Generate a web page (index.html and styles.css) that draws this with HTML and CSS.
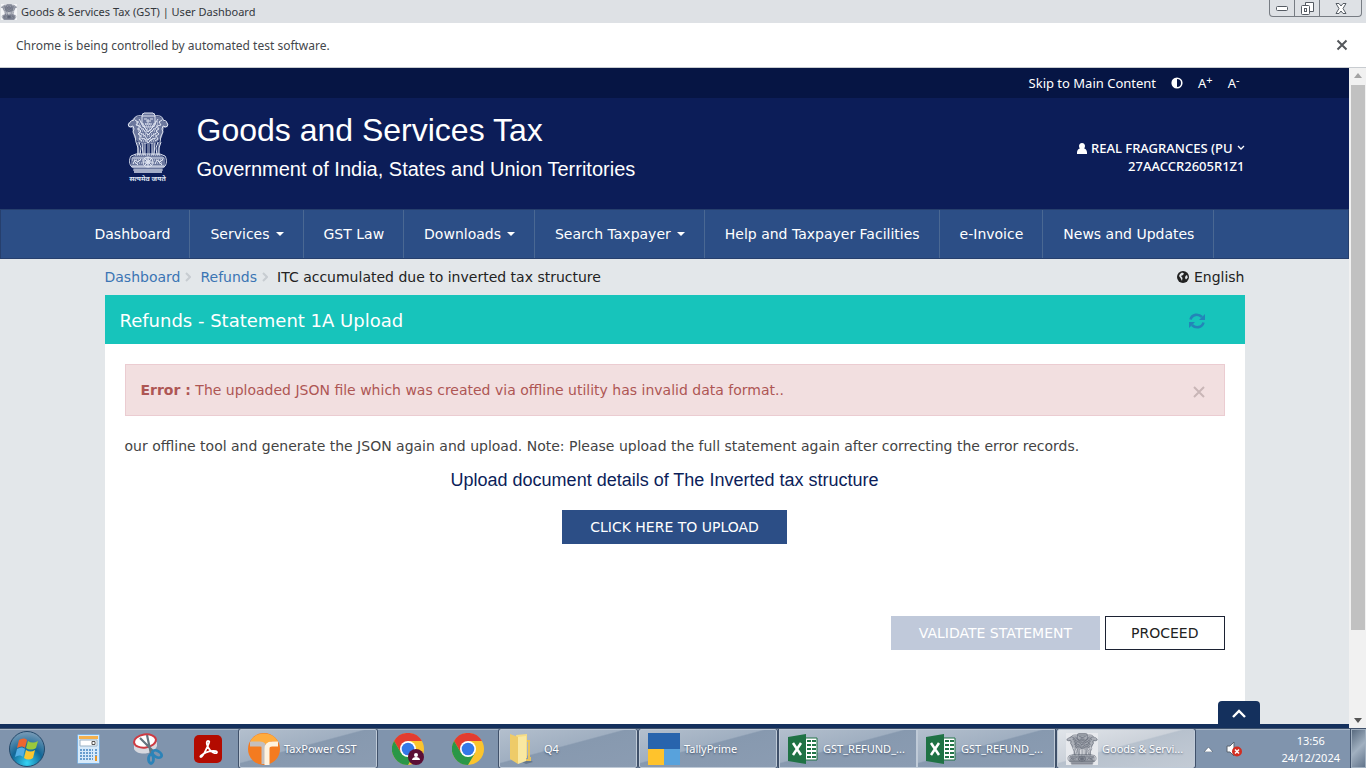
FILE: index.html
```html
<!DOCTYPE html>
<html lang="en">
<head>
<meta charset="utf-8">
<title>Goods &amp; Services Tax (GST) | User Dashboard</title>
<link rel="stylesheet" href="styles.css">
</head>
<body>
<svg class="defs" aria-hidden="true">
  <defs>
    <symbol id="emblem" viewBox="0 0 42 62" preserveAspectRatio="none">
      <g fill="currentColor" opacity=".45">
        <path d="M15 1h13v4c6-1 9 2 9 4l4 2v4l-4 1-2 9-5 5-3 2H15l-4-2-4-5-2-9-4-1v-4l4-2c0-3 4-5 10-4z"/>
        <path d="M10 30h2l1 13h-3zM15 31h2l1 13h-2zM20 32h3v12h-3zM26 31h2l-1 12h-2zM31 30h2l-1 13h-2z"/>
        <path d="M8 43h26l4 3v9l-3 2v4H7v-4l-3-2v-9z"/>
      </g>
      <g fill="none" stroke="currentColor" stroke-width="1">
        <path d="M15 3l2-2h9l2 2v8l-3 4h-7l-3-4zM15 4h13M17 7h3M23 7h3M21 7v4M18 12h6M19 9h5"/>
        <path d="M15 4c-5-1-8 1-8 4l-3 1-3 4 2 2 3-1 1 3-1 3 2 4 1 6M28 4c5-1 8 1 8 4l3 1 2 4-2 2-3-1-1 3 1 3-2 4-1 6"/>
        <path d="M8 8l3 2-2 3 4 1-2 3 3 2-3 3 3 2-2 3 3 2M35 8l-3 2 2 3-4 1 2 3-3 2 3 3-3 2 2 3-3 2"/>
        <path d="M12 7l2 3 2 4 3 3 2 3 3-3 3-3 2-4 2-3M13 15l4 3 4 5 5-5 4-3M12 20l5 3 4 5 5-5 5-3M14 26l4 1 3 4 4-4 4-1"/>
        <path d="M9 30l2 6v7M12 30l2 6-1 7M15 31l1 12M18 31v12M25 31v12M28 31l-1 12M31 30l-2 6 1 7M34 30l-2 6v7"/>
        <path d="M4 44c-2 3-2 9 1 11h32c3-2 3-8 1-11l-5-2H9zM5 46h32M5 54h32M6 58h30M7 60h28"/>
        <circle cx="21" cy="50" r="5"/><circle cx="21" cy="50" r="2"/>
        <path d="M16 50h10M21 45v10M17 46l8 8M25 46l-8 8M6 52l2-4 3 2 3-3M28 52l2-4 3 2 3-3M7 49l4 4M31 49l4 4"/>
      </g>
      <g fill="none" stroke="currentColor" stroke-width="1" stroke-dasharray="1 1">
        <path d="M10 12h22M11 14h20M10 17h22M11 19h20M12 22h18M12 24h18M13 27h16M14 29h14M5 48h32M6 51h30M9 10h6M28 10h6M8 43h26"/>
      </g>
    </symbol>
    <symbol id="chrome" viewBox="0 0 32 32">
      <circle cx="16" cy="16" r="16" fill="#fbc42d"/>
      <path d="M16 16L9.100 20 2.100 8A16 16 0 0 1 29.900 8H16z" fill="#e33d30"/>
      <path d="M2.100 8A16 16 0 0 0 16 32l7-12-7-4-6.900 4z" fill="#2a9748"/>
      <circle cx="16" cy="16" r="8" fill="#fff"/><circle cx="16" cy="16" r="6.300" fill="#3478e8"/>
    </symbol>
    <symbol id="excel" viewBox="0 0 30 30">
      <path d="M17 4h12v22H17z" fill="#fff" stroke="#217346"/>
      <path d="M19 7h4M24 7h4M19 11h4M24 11h4M19 15h4M24 15h4M19 19h4M24 19h4M19 23h4M24 23h4" stroke="#217346" stroke-width="2"/>
      <path d="M0 3l18-3v30L0 27z" fill="#1f7244"/>
      <path d="M5 9l8 12M13 9L5 21" stroke="#fff" stroke-width="2.500"/>
    </symbol>
  </defs>
</svg>

<header class="titlebar">
  <svg class="favicon"><use href="#emblem"/></svg>
  <span>Goods &amp; Services Tax (GST) | User Dashboard</span>
  <div class="window-controls">
    <button aria-label="Minimize"><svg width="12" height="5" fill="#fff" stroke="#555b63"><rect x=".5" y=".5" width="11" height="4" rx="1"/></svg></button>
    <button aria-label="Restore"><svg width="13" height="13" fill="#fff" stroke="#555b63"><path d="M4.500 3V.5h8v9H9"/><rect x=".5" y="3.500" width="8" height="9" rx="1"/><rect x="3.500" y="6.500" width="2" height="3"/></svg></button>
    <button class="wide" aria-label="Close window"><svg width="12" height="11" fill="#fff" stroke="#555b63"><path d="M1 .5h3l2 2.500 2-2.500h3L8 5.500l3 5H8L6 8l-2 2.500H1l3-5z"/></svg></button>
  </div>
</header>
<div class="infobar">
  <span>Chrome is being controlled by automated test software.</span>
  <button aria-label="Close message"><svg width="12" height="12" stroke="#54575b" stroke-width="2"><path d="M1.500 1.500l9 9M10.500 1.500l-9 9"/></svg></button>
</div>

<div class="viewport">
  <main class="page">
    <div class="topbar">
      <div class="container topbar-row">
        <a href="#main">Skip to Main Content</a>
        <button aria-label="Contrast"><svg width="12" height="12"><circle cx="6" cy="6" r="4.800" fill="none" stroke="#fff" stroke-width="1.600"/><path d="M6 1a5 5 0 0 0 0 10z" fill="#fff"/></svg></button>
        <button>A<sup>+</sup></button>
        <button>A<sup>-</sup></button>
      </div>
    </div>
    <div class="masthead">
      <div class="container masthead-row">
        <div class="logo">
          <svg><use href="#emblem"/></svg>
          <span lang="hi">सत्यमेव जयते</span>
        </div>
        <div class="brand">
          <h1>Goods and Services Tax</h1>
          <p>Government of India, States and Union Territories</p>
        </div>
        <div class="account">
          <a href="#account"><svg width="10" height="11" fill="#fff"><path d="M5 0c2 0 3 1.500 3 3 0 1-.3 1.800-.8 2.400C9 6 10 7.500 10 9.500V11H0V9.500C0 7.500 1 6 2.800 5.400 2.300 4.800 2 4 2 3c0-1.500 1-3 3-3z"/></svg>REAL FRAGRANCES (PU<svg width="8" height="6" fill="none" stroke="#fff" stroke-width="1.300"><path d="M1 1l3 3 3-3"/></svg></a>
          <span>27AACCR2605R1Z1</span>
        </div>
      </div>
    </div>
    <nav class="mainnav">
      <ul class="container">
        <li><a href="#dashboard">Dashboard</a></li>
        <li><a href="#services">Services <i class="caret"></i></a></li>
        <li><a href="#law">GST Law</a></li>
        <li><a href="#downloads">Downloads <i class="caret"></i></a></li>
        <li><a href="#search">Search Taxpayer <i class="caret"></i></a></li>
        <li><a href="#help">Help and Taxpayer Facilities</a></li>
        <li><a href="#einvoice">e-Invoice</a></li>
        <li><a href="#news">News and Updates</a></li>
      </ul>
    </nav>
    <div class="body" id="main">
      <div class="container crumbs">
        <a href="#dashboard">Dashboard</a><svg class="sep"><path d="M1 1l4 4-4 4"/></svg>
        <a href="#refunds">Refunds</a><svg class="sep"><path d="M1 1l4 4-4 4"/></svg>
        <span>ITC accumulated due to inverted tax structure</span>
        <button class="language"><svg width="12" height="12"><circle cx="6" cy="6" r="6" fill="#222"/><path d="M3 3l2-1.500 2 1-1 1.500-2 1 1.500 2L5 10 3.500 7 2 5zM8.500 5l1.500-1 .8 2.500L9 8.500l-1-1.500z" fill="#e3e7ea"/></svg> English</button>
      </div>
      <section class="container card">
        <div class="card-head">
          <h2>Refunds - Statement 1A Upload</h2>
          <button aria-label="Refresh"><svg width="16" height="16" viewBox="0 0 16 16"><g fill="none" stroke="#2385b8" stroke-width="2.600"><path d="M1.500 6.500C3 1 9.500.5 13 4M14.500 9.500C13 15 6.500 15.500 3 12"/></g><path d="M16 1v6h-6zM0 15V9h6z" fill="#2385b8"/></svg></button>
        </div>
        <div class="card-body">
          <div class="alert" role="alert">
            <p><strong>Error :</strong> The uploaded JSON file which was created via offline utility has invalid data format..</p>
            <button aria-label="Dismiss"><svg width="12" height="12" stroke="#c9b6b7" stroke-width="2"><path d="M1 1l10 10M11 1L1 11"/></svg></button>
          </div>
          <p class="ticker">our offline tool and generate the JSON again and upload. Note: Please upload the full statement again after correcting the error records.</p>
          <h3>Upload document details of The Inverted tax structure</h3>
          <button class="btn primary">CLICK HERE TO UPLOAD</button>
          <div class="actions">
            <button class="btn primary" disabled>VALIDATE STATEMENT</button>
            <button class="btn outline">PROCEED</button>
          </div>
        </div>
      </section>
    </div>
    <div class="footer-edge">
      <div class="container"><button class="to-top" aria-label="Back to top"><svg width="14" height="9" fill="none" stroke="#fff" stroke-width="2.400"><path d="M1 8l6-6 6 6"/></svg></button></div>
    </div>
  </main>
  <div class="scrollbar">
    <i class="up"></i><div class="thumb"></div><i class="down"></i>
  </div>
</div>

<footer class="taskbar">
  <button class="launch" aria-label="Start"><svg width="38" height="38" viewBox="0 0 38 38">
    <defs><radialGradient id="orb" cx=".5" cy=".9" r=".9"><stop offset="0" stop-color="#34d3f4"/><stop offset=".5" stop-color="#126797"/><stop offset="1" stop-color="#7d9db8"/></radialGradient></defs>
    <circle cx="19" cy="19" r="17.500" fill="url(#orb)" stroke="#24496b"/>
    <path d="M11 10c3-2 6-2 8 0l-2 8c-2-2-5-2-8 0z" fill="#ed6530"/><path d="M20 11c3 2 6 2 10 0l-2 7c-3 2-7 2-10 0z" fill="#9ac83c"/>
    <path d="M9 19c3-2 6-2 8 0l-2 8c-2-2-5-2-8 0z" fill="#53aee4"/><path d="M18 20c3 2 6 2 9 0l-2 8c-3 2-6 2-9 0z" fill="#fbc62f"/></svg></button>
  <button class="launch" aria-label="Calculator"><svg width="23" height="30"><rect x=".5" y=".5" width="22" height="29" rx="1" fill="#d7eafa" stroke="#79aede"/><path d="M2 2h19v3H2z" fill="#f4b14d"/><path d="M3 6h17v6H3z" fill="#fff" stroke="#9ab2c5"/><path d="M15 7.500h3v3h-3z" fill="none" stroke="#555"/><path d="M3 16h13M3 19h13M3 22h13M3 25h13" stroke="#679dce" stroke-width="2" stroke-dasharray="2 1"/><path d="M19 15v7" stroke="#679dce" stroke-width="2" stroke-dasharray="2 1"/><path d="M18 22h2v5h-2z" fill="#e99624"/></svg></button>
  <button class="launch" aria-label="Snipping Tool"><svg width="30" height="32"><path d="M1 9v7c3 7 20 6 23-3V9z" fill="#d6d8df"/><ellipse cx="12" cy="8" rx="11" ry="6.500" transform="rotate(-8 12 8)" fill="#fff" stroke="#ce3a42" stroke-width="2"/><path d="M7 5l14 14M14 2l4 19" stroke="#66747f" stroke-width="2.200"/><g fill="none" stroke="#2c83b8" stroke-width="2.800"><ellipse cx="24" cy="21" rx="5" ry="3" transform="rotate(30 24 21)"/><ellipse cx="18" cy="26" rx="2.500" ry="4.500"/></g></svg></button>
  <button class="launch" aria-label="Acrobat"><svg width="28" height="28"><rect width="28" height="28" rx="5" fill="#b30b00"/><path d="M14 6c-2.500 0-1 5.500 2 9s7 4 7 2.200-7-1.700-11 .3-7 4.500-5 4.500 4.500-6 6.500-10.500S16 6 14 6z" fill="none" stroke="#fff" stroke-width="1.800"/></svg></button>
  <button class="task"><svg width="32" height="32"><circle cx="16" cy="16" r="16" fill="#f47b20"/><path d="M3 7C9-2 25-2 30 9l-7-1-2 3H3z" fill="#ffac3e"/><path d="M2 11h10c3 0 4 1 4 4v16" fill="none" stroke="#c4bfbd" stroke-width="5"/><path d="M19 32V16c0-4 2-5 5-5h6" fill="none" stroke="#fff3df" stroke-width="5"/></svg><span>TaxPower GST</span></button>
  <button class="launch" aria-label="Chrome profile"><svg width="32" height="32"><use href="#chrome"/><circle cx="24" cy="24" r="8" fill="#5b0f35"/><circle cx="24" cy="22" r="2" fill="#fff"/><path d="M20 27c0-4 8-4 8 0z" fill="#fff"/></svg></button>
  <button class="launch" aria-label="Chrome"><svg width="32" height="32"><use href="#chrome"/></svg></button>
  <button class="task"><svg width="32" height="32"><path d="M14 29l8-2 3 2-7 2z" fill="#66788b"/><path d="M8 2l11-1v24l-8 4z" fill="#f5dc85"/><path d="M2 1l8 3v27l-8-5z" fill="#eecb68"/><path d="M10 4l8-1v25l-8 3z" fill="#f9e8a1"/><path d="M19 8h2v19h-3M22 24v4" fill="none" stroke="#e9c35d" stroke-width="2"/></svg><span>Q4</span></button>
  <button class="task"><svg width="32" height="32"><path d="M0 0h32v16H0z" fill="#2864ad"/><path d="M0 16h16v16H0z" fill="#ffc32c"/><path d="M16 16h16v16H16z" fill="#58a2dc"/></svg><span>TallyPrime</span></button>
  <div class="task-group">
    <button class="task"><svg width="30" height="30"><use href="#excel"/></svg><span>GST_REFUND_...</span></button>
    <button class="task"><svg width="30" height="30"><use href="#excel"/></svg><span>GST_REFUND_...</span></button>
  </div>
  <button class="task active"><svg class="emblem-tile" width="32" height="32"><use href="#emblem"/></svg><span>Goods &amp; Servi...</span></button>
  <div class="tray">
    <svg width="9" height="6"><path d="M0 6l4.500-5L9 6z" fill="#fff" stroke="#46576a" stroke-width=".6"/></svg>
    <svg width="17" height="16"><path d="M1 5h3l4-4v14l-4-4H1z" fill="#fff" stroke="#58636e"/><circle cx="11" cy="10.500" r="5" fill="#d22d20"/><path d="M9 8.500l4 4M13 8.500l-4 4" stroke="#fff" stroke-width="1.500"/></svg>
  </div>
  <div class="clock"><time>13:56</time><time>24/12/2024</time></div>
  <button class="show-desktop" aria-label="Show desktop"></button>
</footer>
</body>
</html>
```
FILE: styles.css
```css
* { box-sizing: border-box; }
body { margin: 0; min-height: 100vh; display: flex; flex-direction: column; font-family: "DejaVu Sans", Verdana, sans-serif; font-size: 14px; color: #222; background: #e3e7ea; }
h1, h2, h3, p, ul { margin: 0; padding: 0; font-weight: 400; }
button { font: inherit; color: inherit; background: none; border: 0; padding: 0; }
a { color: inherit; text-decoration: none; }
svg { flex: none; }
.defs { position: absolute; width: 0; height: 0; }

.titlebar { display: flex; height: 23px; padding: 0 4px 0 1px; align-items: center; background: #dee1e5; font: 11px "Noto Sans", sans-serif; color: #33373c; gap: 4px; }
.favicon { width: 16px; height: 16px; color: #4d5468; background: #f4f5f8; }
.window-controls { display: flex; align-self: flex-start; height: 17px; margin-left: auto; border: 1px solid #777c83; border-top: 0; border-radius: 0 0 4px 4px; }
.window-controls button { width: 25px; display: flex; justify-content: center; align-items: center; border-right: 1px solid #777c83; }
.window-controls button.wide { width: 41px; border: 0; }
.infobar { display: flex; height: 45px; padding: 0 18px 0 16px; align-items: center; justify-content: space-between; background: #fff; border-bottom: 1px solid #c8ccd0; font: 12px "Noto Sans", sans-serif; color: #44474b; }
.infobar button { display: flex; }

.viewport { flex: 1; display: flex; }
.page { flex: 1; min-width: 0; display: flex; flex-direction: column; }
.container { width: 100%; max-width: 1140px; margin: 0 auto; }
.topbar { background: #061544; color: #fff; font: 13px "Noto Sans", sans-serif; }
.topbar-row { display: flex; height: 30px; align-items: center; justify-content: flex-end; gap: 15px; padding-right: 5px; }
.topbar-row button { display: flex; align-items: center; }
.topbar sup { font-size: 11px; line-height: 11px; align-self: flex-start; }
.masthead { background: #0c1d58; color: #fff; }
.masthead-row { display: flex; height: 111px; padding-left: 22px; }
.logo { display: flex; flex-direction: column; align-items: center; width: 42px; margin-top: 14px; color: #dfe4f1; font: bold 7px/9px "Noto Sans", sans-serif; white-space: nowrap; }
.logo svg { width: 42px; height: 62px; }
.brand { margin: 14px 0 0 28px; font-family: "Liberation Sans", Arial, sans-serif; }
.brand h1 { font-size: 32px; line-height: 36px; }
.brand p { font-size: 20px; line-height: 24px; margin-top: 9px; }
.account { margin: 41px 0 0 auto; display: flex; flex-direction: column; align-items: flex-end; font: 500 13px/18px "Noto Sans", sans-serif; }
.account a { display: flex; align-items: center; gap: 4px; }
.mainnav { background: #2c4e86; border: 1px solid #263f6d; }
.mainnav ul { display: flex; list-style: none; }
.mainnav li { border-right: 1px solid #4a6893; }
.mainnav li:first-child { margin-left: -30px; }
.mainnav a { display: flex; height: 48px; align-items: center; gap: 6px; padding: 0 19px 0 20px; color: #fff; white-space: nowrap; }
.caret { border: 4px solid transparent; border-top-color: #fff; border-bottom: 0; }

.body { flex: 1; display: flex; flex-direction: column; }
.crumbs { display: flex; height: 36px; align-items: center; }
.crumbs a { color: #3b75b4; }
.sep { width: 6px; height: 10px; margin: 0 9px 0 5px; fill: none; stroke: #c7ccd1; stroke-width: 2; }
.language { margin-left: auto; display: flex; align-items: center; gap: 5px; }
.card { flex: 1; background: #fff; }
.card-head { display: flex; height: 49px; padding: 2px 40px 0 15px; align-items: center; justify-content: space-between; background: #17c4bb; color: #fff; }
.card-head h2 { font-size: 18px; }
.card-head button { display: flex; }
.card-body { display: flex; flex-direction: column; align-items: center; padding: 20px; }
.alert { display: flex; width: 100%; height: 52px; padding: 0 19px 0 15px; align-items: center; justify-content: space-between; background: #f2dfe0; border: 1px solid #ebccd1; color: #ae5654; }
.alert button { display: flex; margin-top: 4px; }
.ticker { width: 100%; margin-top: 20px; line-height: 20px; color: #444; }
.card h3 { margin-top: 12px; padding-right: 20px; font: 18px/24px "Liberation Sans", Arial, sans-serif; color: #0b1e59; }
.btn { height: 34px; padding: 0 25px; border: 1px solid #2c4e86; font-size: 14px; }
.primary { margin-top: 18px; padding: 0 27px; background: #2c4e86; color: #fff; }
.actions { display: flex; align-self: flex-end; gap: 5px; margin-top: 72px; }
.actions .primary { margin: 0; }
.primary:disabled { background: #c0c9da; border-color: #c0c9da; }
.outline { border-color: #1c2233; background: #fff; }
.footer-edge { height: 4px; background: #14305d; }
.footer-edge .container { position: relative; }
.to-top { position: absolute; right: -15px; top: -23px; width: 42px; height: 24px; background: #14305d; border-radius: 4px 4px 0 0; }

.scrollbar { width: 17px; padding: 5px 1px 5px 2px; display: flex; flex-direction: column; align-items: center; background: #f1f1f1; }
.thumb { width: 100%; flex: 1; margin: 7px 0 88px; background: #c1c1c1; }
.up, .down { border: 4px solid transparent; }
.up { border-top: 0; border-bottom: 5px solid #a3a3a3; }
.down { border-bottom: 0; border-top: 5px solid #555; }

.taskbar { display: flex; height: 40px; align-items: stretch; background: #8094ad; border-top: 1px solid #3c506c; box-shadow: inset 0 1px #a9b7c8; color: #fff; font: 11px "Noto Sans", sans-serif; }
.launch { width: 60px; display: flex; align-items: center; justify-content: center; }
.launch:first-child { width: 54px; margin-right: 4px; }
.task { flex: 0 1 138px; min-width: 0; margin: 0 1px; padding: 0 8px; display: flex; align-items: center; gap: 4px; border: 1px solid #bfcad7; outline: 1px solid #40516a; border-radius: 2px; background: linear-gradient(165deg, #b3bfcd 0%, #a0afc1 44%, #8799af 46%, #8b9cb2 100%); white-space: nowrap; text-shadow: 0 1px 2px #40516a; }
.task-group { display: flex; flex: 0 1 276px; margin: 0 1px; outline: 1px solid #40516a; }
.task-group .task { margin: 0; outline: 0; border-radius: 0; gap: 5px; }
.active { background: linear-gradient(165deg, #e0e4e9 0%, #ccd2da 44%, #b7c1cd 46%, #c3cbd5 100%); }
.emblem-tile { background: #e7e9ed; color: #666c79; }
.tray { display: flex; align-items: center; gap: 13px; margin-left: 8px; }
.clock { margin-left: auto; padding-right: 26px; display: flex; flex-direction: column; justify-content: center; text-align: center; line-height: 17px; }
.show-desktop { width: 15px; margin-left: -15px; border: 1px solid #a1b0c0; outline: 1px solid #40516a; background: linear-gradient(135deg, #596b80, #a1b0c0 50%, #62748b); }
```
